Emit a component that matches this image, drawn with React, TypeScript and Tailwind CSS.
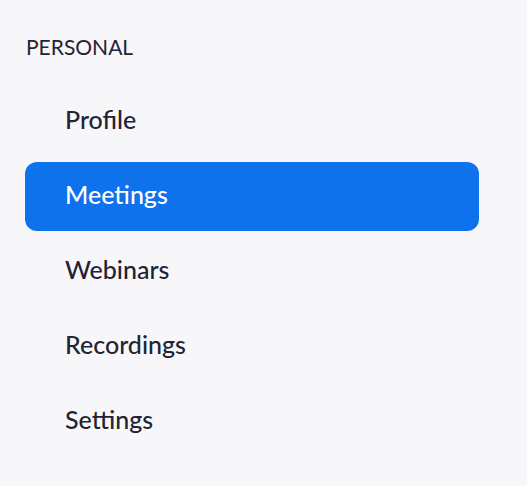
const ITEMS = ["Profile", "Meetings", "Webinars", "Recordings", "Settings"];

export default function App() {
  const active = "Meetings";

  return (
    <div className="min-h-[486px] w-[527px] bg-[#f7f7fa] pl-[25px] pr-[48px] pt-[34px] font-['Lato',sans-serif]">
      <p className="pl-[1px] text-[21px] leading-[26px] text-[#232333]">PERSONAL</p>

      <nav className="mt-[27px] flex flex-col gap-[6px]">
        {ITEMS.map((item) => (
          <a
            key={item}
            href="#"
            className={`flex h-[69px] items-center rounded-[12px] pb-[3px] pl-[40px] text-[25px] font-medium ${
              item === active ? "bg-[#0e72ed] text-white" : "text-[#232333]"
            }`}
          >
            {item}
          </a>
        ))}
      </nav>
    </div>
  );
}
